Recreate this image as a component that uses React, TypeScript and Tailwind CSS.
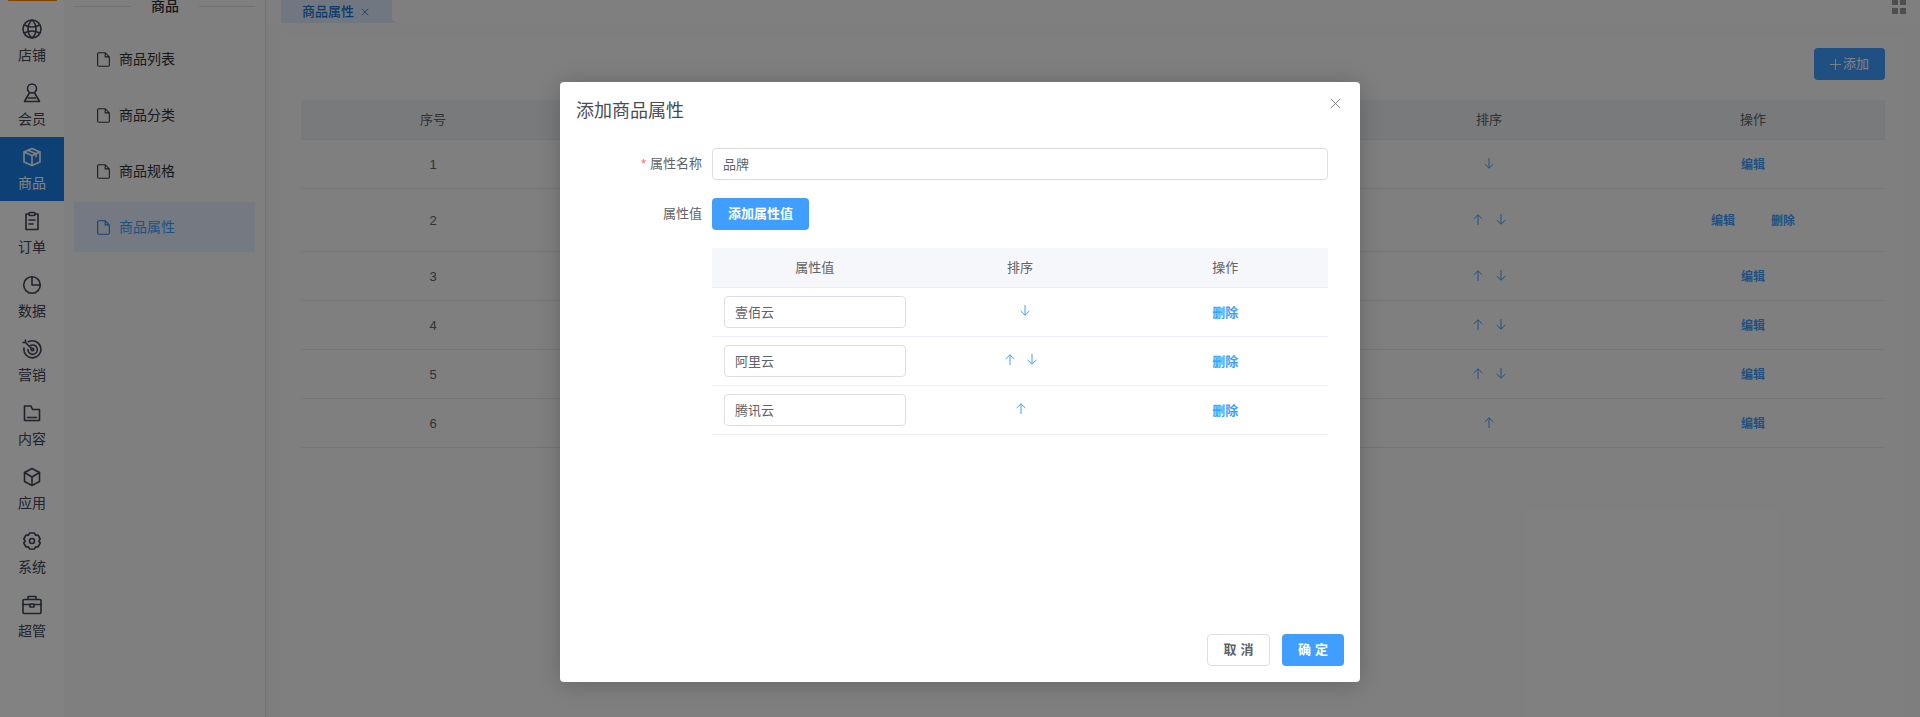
import { ReactNode } from "react";

const ic = "w-5 h-5";
const sw = { fill: "none", stroke: "currentColor", strokeWidth: 1.6, strokeLinecap: "round", strokeLinejoin: "round" } as const;

const railItems: { label: string; active?: boolean; icon: ReactNode }[] = [
  {
    label: "店铺",
    icon: (
      <svg viewBox="0 0 20 20" className={ic} {...sw}>
        <circle cx="10" cy="10" r="9" />
        <path d="M10 1c-3 2.500-4 5.500-4 9s1 6.500 4 9c3-2.500 4-5.500 4-9s-1-6.500-4-9z" />
        <path d="M2.500 6c2 1.300 4.500 2 7.500 2s5.500-.7 7.500-2M2.500 14c2-1.300 4.500-2 7.500-2s5.500.7 7.500 2" />
      </svg>
    ),
  },
  {
    label: "会员",
    icon: (
      <svg viewBox="0 0 20 20" className={ic} {...sw}>
        <circle cx="10" cy="5.500" r="4.500" />
        <path d="M7.300 10 2.500 18.500h15L12.700 10M6.500 15h7" />
      </svg>
    ),
  },
  {
    label: "商品",
    active: true,
    icon: (
      <svg viewBox="0 0 20 20" className={ic} {...sw}>
        <path d="M10 1.500 2 5v10l8 3.500 8-3.500V5z" />
        <path d="M2 5l8 3.500L18 5M10 8.500v10M6 3.300l8 3.500v3" />
      </svg>
    ),
  },
  {
    label: "订单",
    icon: (
      <svg viewBox="0 0 20 20" className={ic} {...sw}>
        <path d="M7 3H4v15.500h12V3h-3" />
        <rect x="7" y="1.500" width="6" height="3" rx="1" />
        <path d="M7 9h6M7 13h4" />
      </svg>
    ),
  },
  {
    label: "数据",
    icon: (
      <svg viewBox="0 0 20 20" className={ic} {...sw}>
        <circle cx="10" cy="10" r="8.300" />
        <path d="M10 1.700V10h8.300" />
      </svg>
    ),
  },
  {
    label: "营销",
    icon: (
      <svg viewBox="0 0 20 20" className={ic} {...sw}>
        <path d="M6.500 2.800A8.500 8.500 0 1 1 2 9" />
        <path d="M8.500 6.500A4.700 4.700 0 1 1 6 10.500" />
        <circle cx="10.500" cy="10.500" r="1.300" />
        <path d="M10 10 3.500 3.500M1 3.500h2.500V1" />
      </svg>
    ),
  },
  {
    label: "内容",
    icon: (
      <svg viewBox="0 0 20 20" className={ic} {...sw}>
        <path d="M2.500 3h6.500l1.500 3.500H17.500V17.500h-15zM5.500 14.500h9" />
      </svg>
    ),
  },
  {
    label: "应用",
    icon: (
      <svg viewBox="0 0 20 20" className={ic} {...sw}>
        <path d="M10 1.500 2.500 5.500v9l7.500 4 7.500-4v-9z" />
        <path d="M2.500 5.500 10 10l7.500-4.500M10 10v8.500" />
      </svg>
    ),
  },
  {
    label: "系统",
    icon: (
      <svg viewBox="0 0 20 20" className={ic} {...sw}>
        <path d="M7.500 2h5l1 2.200 2.400-.2 2.300 4-1.400 2 1.400 2-2.300 4-2.400-.2-1 2.200h-5l-1-2.200-2.400.2-2.300-4 1.400-2-1.400-2 2.300-4 2.400.2z" />
        <circle cx="10" cy="10" r="2.500" />
      </svg>
    ),
  },
  {
    label: "超管",
    icon: (
      <svg viewBox="0 0 20 20" className={ic} {...sw}>
        <rect x="1" y="4.500" width="18" height="14" rx="1" />
        <path d="M6 4.500V1.500h8v3M1 9.500h6.500M12.500 9.500H19" />
        <rect x="8" y="9" width="4" height="3" />
      </svg>
    ),
  },
];

const subItems = ["商品列表", "商品分类", "商品规格", "商品属性"];

const rows = [
  { n: 1, up: false, down: true, del: false, h: "h-[49px]" },
  { n: 2, up: true, down: true, del: true, h: "h-[63px]" },
  { n: 3, up: true, down: true, del: false, h: "h-[49px]" },
  { n: 4, up: true, down: true, del: false, h: "h-[49px]" },
  { n: 5, up: true, down: true, del: false, h: "h-[49px]" },
  { n: 6, up: true, down: false, del: false, h: "h-[49px]" },
];

const attrs = [
  { v: "壹佰云", up: false, down: true },
  { v: "阿里云", up: true, down: true },
  { v: "腾讯云", up: true, down: false },
];

function DocIcon({ active }: { active?: boolean }) {
  return (
    <svg viewBox="0 0 14 16" className={`w-[13px] h-[15px] ${active ? "text-[#2f7fe0]" : "text-[#34373d]"}`} fill="none" stroke="currentColor" strokeWidth="1.200">
      <path d="M2 .7h6.800l4.500 4.500V14a1.300 1.300 0 0 1-1.300 1.300H2A1.300 1.300 0 0 1 .7 14V2A1.300 1.300 0 0 1 2 .7zM8.800.7v4.500h4.500" />
    </svg>
  );
}

function Arrow({ dir }: { dir: "up" | "down" }) {
  return (
    <svg viewBox="0 0 10 11" className="w-[10px] h-[11px] text-[#409eff]" fill="none" stroke="currentColor" strokeWidth="1">
      {dir === "up" ? <path d="M5 11V.8M.7 5 5 .8 9.300 5" /> : <path d="M5 0v10.200M.7 6 5 10.200 9.300 6" />}
    </svg>
  );
}

export default function App() {
  return (
    <div className="relative flex h-[717px] w-[1920px] overflow-hidden bg-white font-['Liberation_Sans','Noto_Sans_CJK_SC',sans-serif] text-[13px] text-[#303133]">
      {/* rail */}
      <aside className="relative w-[64px] shrink-0 bg-white pt-[9px]">
        <div className="absolute left-[8px] top-0 h-[1px] w-[49px] bg-[#ff8a00]" />
        {railItems.map((it) => (
          <div
            key={it.label}
            className={`flex h-[64px] flex-col items-center pt-[10px] ${it.active ? "bg-[#1a80e8] text-white" : "text-[#3f4552]"}`}
          >
            {it.icon}
            <span className="mt-[6px] text-[14px] leading-[20px]">{it.label}</span>
          </div>
        ))}
      </aside>

      {/* sub menu */}
      <aside className="w-[202px] shrink-0 border-r border-[#e0e0e0] bg-[#fafafa] px-[10px]">
        <div className="flex h-[12px] items-center justify-between">
          <span className="h-px w-[57px] bg-[#dcdfe6]" />
          <span className="text-[14px] font-medium leading-[12px] text-[#303133]">商品</span>
          <span className="h-px w-[56px] bg-[#dcdfe6]" />
        </div>
        <div className="mt-[22px] flex flex-col gap-[6px]">
          {subItems.map((s, i) => (
            <div
              key={s}
              className={`flex h-[50px] items-center gap-[9px] pl-[23px] text-[14px] ${i === 3 ? "bg-[#e6f0ff] text-[#409eff]" : "text-[#303133]"}`}
            >
              <DocIcon active={i === 3} />
              <span>{s}</span>
            </div>
          ))}
        </div>
      </aside>

      {/* main */}
      <main className="flex min-w-0 flex-1 flex-col bg-[#f6f8f6]">
        <div className="flex h-[23px] items-start justify-between bg-[#fafafa] pl-[15px] pr-[14px]">
          <div className="relative flex h-[23px] w-[111px] items-center gap-[7px] bg-[#dce9fb] pl-[21px] font-medium text-[#1a72d0]">
            <span className="leading-[18px]">商品属性</span>
            <svg viewBox="0 0 10 10" className="h-[8px] w-[8px]" fill="none" stroke="currentColor">
              <path d="M1 1l8 8M9 1 1 9" />
            </svg>
            <svg viewBox="0 0 8 6" className="absolute bottom-0 left-full h-[6px] w-[8px] text-[#dce9fb]" fill="currentColor">
              <path d="M0 0c0 3.500 3 6 8 6H0z" />
            </svg>
          </div>
          <div className="grid grid-cols-[6px_6px] grid-rows-[5px_6px] gap-x-[2px] gap-y-[3px]">
            <span className="bg-[#999]" />
            <span className="bg-[#999]" />
            <span className="bg-[#999]" />
            <span className="bg-[#999]" />
          </div>
        </div>
        <div className="mx-[15px] mt-[15px] flex-1 bg-[#fafafa] px-[20px] pt-[10px]">
          <div className="flex justify-end">
            <button className="flex h-[32px] w-[71px] items-center justify-center gap-[2px] rounded-[4px] bg-[#409eff] text-white">
              <svg viewBox="0 0 12 12" className="h-[11px] w-[11px]" fill="none" stroke="currentColor">
                <path d="M6 0v12M0 6h12" />
              </svg>
              添加
            </button>
          </div>
          <div className="mt-[20px]">
            <div className="grid h-[40px] grid-cols-6 items-center border-b border-[#e6e8ec] bg-[#eef0f4] text-center text-[#606266]">
              <span>序号</span>
              <span />
              <span />
              <span />
              <span>排序</span>
              <span>操作</span>
            </div>
            {rows.map((r) => (
              <div key={r.n} className={`grid grid-cols-6 items-center border-b border-[#e6e8ec] text-center ${r.h}`}>
                <span className="pt-[2px] text-[#606266]">{r.n}</span>
                <span />
                <span />
                <span />
                <span className="flex items-center justify-center gap-[13px] pb-[2px]">
                  {r.up && <Arrow dir="up" />}
                  {r.down && <Arrow dir="down" />}
                </span>
                <span className="flex justify-center gap-[36px] pt-[2px] text-[12px] font-bold text-[#409eff]">
                  <span>编辑</span>
                  {r.del && <span>删除</span>}
                </span>
              </div>
            ))}
          </div>
        </div>
      </main>

      {/* overlay + dialog */}
      <div className="absolute inset-0 flex items-start justify-center bg-black/[0.49] pt-[82px]">
        <div className="flex h-[600px] w-[800px] flex-col rounded-[4px] bg-white shadow-[0_2px_24px_rgba(0,0,0,0.2)]">
          <div className="flex items-start justify-between pl-[16px] pr-[19px] pt-[16px]">
            <span className="mt-[1px] text-[18px] leading-[24px] text-[#494c52]">添加商品属性</span>
            <svg viewBox="0 0 12 12" className="h-[11px] w-[11px] text-[#808080]" fill="none" stroke="currentColor">
              <path d="M1 1l10 10M11 1 1 11" />
            </svg>
          </div>

          <div className="mt-[25px] flex-1 pl-[152px] pr-[32px]">
            <div className="relative">
              <div className="absolute right-full top-0 mr-[10px] flex h-[32px] w-[120px] items-center justify-end text-[#606266]">
                <span className="mr-[4px] text-[#f56c6c]">*</span>属性名称
              </div>
              <div className="flex h-[32px] items-center rounded-[4px] border border-[#dcdfe6] px-[10px] pt-[1px] text-[#606266]">
                品牌
              </div>
            </div>
            <div className="relative mt-[18px]">
              <div className="absolute right-full top-0 mr-[10px] flex h-[32px] w-[120px] items-center justify-end text-[#606266]">
                属性值
              </div>
              <button className="h-[32px] w-[97px] rounded-[4px] bg-[#409eff] font-bold text-white">添加属性值</button>
            </div>
            <div className="mt-[18px]">
              <div className="grid h-[40px] grid-cols-3 items-center border-b border-[#ebeef5] bg-[#f5f7fa] text-center text-[#606266]">
                <span>属性值</span>
                <span>排序</span>
                <span>操作</span>
              </div>
              {attrs.map((a) => (
                <div key={a.v} className="grid h-[49px] grid-cols-3 items-center border-b border-[#ebeef5] text-center">
                  <div className="pl-[12px]">
                    <div className="flex h-[32px] w-[182px] items-center rounded-[4px] border border-[#dcdfe6] px-[10px] pt-[1px] text-[#606266]">
                      {a.v}
                    </div>
                  </div>
                  <span className={`flex items-center justify-center gap-[12px] pb-[3px] ${a.up ? "pl-[2px]" : "pl-[10px]"}`}>
                    {a.up && <Arrow dir="up" />}
                    {a.down && <Arrow dir="down" />}
                  </span>
                  <span className="pt-[1px] font-bold text-[#409eff]">删除</span>
                </div>
              ))}
            </div>
          </div>

          <div className="flex justify-end gap-[12px] pb-[16px] pr-[16px]">
            <button className="h-[32px] w-[63px] rounded-[4px] border border-[#dcdfe6] bg-white pl-[4px] font-bold tracking-[4px] text-[#606266]">取消</button>
            <button className="h-[32px] w-[62px] rounded-[4px] bg-[#409eff] pl-[4px] font-bold tracking-[4px] text-white">确定</button>
          </div>
        </div>
      </div>
    </div>
  );
}
